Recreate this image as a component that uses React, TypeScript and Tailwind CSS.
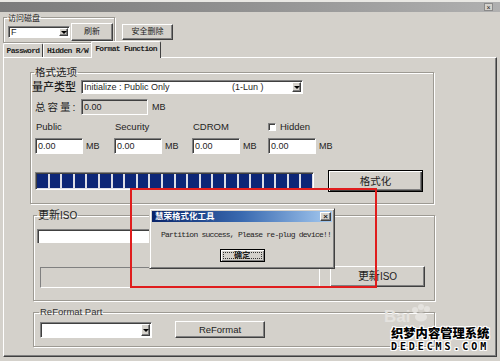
import React from 'react'

const face = 'bg-[#d4d1cb]'
const raised =
  'border border-t-white border-l-white border-r-[#404040] border-b-[#404040] shadow-[inset_-1px_-1px_0_#808080]'
const sunken =
  'border border-t-[#808080] border-l-[#808080] border-r-white border-b-white shadow-[inset_1px_1px_0_#404040]'
const group =
  'border border-[#9d9a93] shadow-[inset_1px_1px_0_#fff,1px_1px_0_#fff] p-0 m-0 min-w-0'
const outline =
  '[text-shadow:1px_0_0_#fff,-1px_0_0_#fff,0_1px_0_#fff,0_-1px_0_#fff,1px_1px_0_#fff,-1px_-1px_0_#fff,1px_-1px_0_#fff,-1px_1px_0_#fff]'

const Button: React.FC<{ className?: string; children: React.ReactNode }> = ({
  className = '',
  children,
}) => (
  <div
    className={`${raised} ${face} flex items-center justify-center leading-none ${className}`}
  >
    {children}
  </div>
)

const Arrow = () => (
  <span className="border-x-[3px] border-x-transparent border-t-[3px] border-t-black" />
)

const Combo: React.FC<{ className?: string; children?: React.ReactNode }> = ({
  className = '',
  children,
}) => (
  <div className={`${sunken} bg-white flex items-stretch ${className}`}>
    <span className="flex-1 flex items-center pl-[2px] text-[9px] leading-none overflow-hidden whitespace-nowrap">
      {children}
    </span>
    <span className={`w-[9px] m-[1px] ${raised} ${face} flex items-center justify-center`}>
      <Arrow />
    </span>
  </div>
)

const Input: React.FC<{ className?: string; value?: string; gray?: boolean }> = ({
  className = '',
  value = '',
  gray = false,
}) => (
  <div
    className={`${sunken} ${gray ? face : 'bg-white'} flex items-center pl-[2px] text-[9px] leading-none ${className}`}
  >
    {value}
  </div>
)

const Tab: React.FC<{ className: string; active?: boolean; children: React.ReactNode }> = ({
  className,
  active = false,
  children,
}) => (
  <div
    className={`border-t border-l border-r border-t-white border-l-white border-r-[#404040] rounded-t-[2px] ${face} flex items-center justify-center font-['Liberation_Mono',monospace] font-bold text-[8px] tracking-[-0.7px] leading-none whitespace-nowrap ${
      active ? 'relative z-10 h-[17px] -mb-px -ml-px pb-[2px]' : 'h-[14px]'
    } ${className}`}
  >
    {children}
  </div>
)

const sizes = [
  { label: 'Public', w: 'w-[79px]' },
  { label: 'Security', w: 'w-[78px]' },
  { label: 'CDROM', w: 'w-[76px]' },
]

export default function App() {
  return (
    <div className="relative w-[500px] h-[361px] overflow-hidden bg-[#d4d1cb] text-[#1e1e1e] font-['Liberation_Sans','Noto_Sans_CJK_SC',sans-serif]">
      {/* window title */}
      <div className="h-[12px] border-t-2 border-t-[#e9e8e4] bg-linear-to-r from-[#7b7b7b] via-[#929292] to-[#b0b0b0] flex items-center justify-end pr-[7px]">
        <div className="w-[9px] h-[8px] bg-[#d4d1cb] border border-[#8a8a8a] text-[7px] leading-none flex items-center justify-center">
          ×
        </div>
      </div>

      {/* disk row */}
      <div className="flex items-start h-[31px]">
        <fieldset className={`ml-[3px] w-[112px] h-[31px] ${group}`}>
          <legend className="ml-[3px] px-[1px] text-[8px] leading-[11px] font-['Noto_Sans_CJK_SC',sans-serif]">
            访问磁盘
          </legend>
          <div className="flex items-center h-[18px]">
            <Combo className="ml-[4px] w-[62px] h-[12px]">F</Combo>
            <Button className="ml-[1px] w-[42px] h-[18px] text-[8px]">刷新</Button>
          </div>
        </fieldset>
        <Button className="ml-[7px] mt-[12px] w-[51px] h-[16px] text-[8px]">安全删除</Button>
      </div>

      {/* tabs */}
      <div className="flex items-end h-[14px] pl-[3px]">
        <Tab className="w-[40px]">Password</Tab>
        <Tab className="w-[49px]">Hidden R/W</Tab>
        <Tab className="w-[70px]" active>
          Format Function
        </Tab>
      </div>

      {/* tab panel */}
      <div
        className={`mx-[3px] w-[494px] h-[300px] border border-t-white border-l-white border-r-[#404040] border-b-[#404040] shadow-[inset_-1px_-1px_0_#808080]`}
      >
        {/* 格式选项 */}
        <fieldset className={`ml-[26px] mt-[8px] w-[404px] h-[138px] ${group}`}>
          <legend className="ml-[3px] px-[1px] text-[10.5px] leading-[12px]">格式选项</legend>
          <div className="mt-[2px] h-[14px] flex items-center">
            <span className="ml-[1px] w-[49px] text-[11px] leading-none font-medium whitespace-nowrap">量产类型</span>
            <Combo className="w-[222px] h-[14px]">
              <span className="w-[148px]">Initialize : Public Only</span>
              <span>(1-Lun )</span>
            </Combo>
          </div>
          <div className="mt-[5px] h-[16px] flex items-center">
            <span className="ml-[4px] w-[46px] text-[10.5px] leading-none tracking-[2px] whitespace-nowrap">总容量:</span>
            <Input className="w-[67px] h-[16px]" value="0.00" gray />
            <span className="ml-[4px] text-[9px] leading-none">MB</span>
          </div>
          <div className="mt-[6px] h-[12px] flex items-center pl-[4px] text-[9.5px] leading-none">
            {sizes.map((s) => (
              <span key={s.label} className={`${s.w} pl-[1px]`}>
                {s.label}
              </span>
            ))}
            <span className={`w-[8px] h-[8px] bg-white ${sunken}`} />
            <span className="ml-[4px]">Hidden</span>
          </div>
          <div className="mt-[5px] h-[16px] flex items-center pl-[4px]">
            {sizes.map((s) => (
              <div key={s.label} className={`${s.w} flex items-center`}>
                <Input className="w-[48px] h-[16px]" value="0.00" />
                <span className="ml-[3px] text-[9px] leading-none">MB</span>
              </div>
            ))}
            <Input className="w-[48px] h-[16px]" value="0.00" />
            <span className="ml-[3px] text-[9px] leading-none">MB</span>
          </div>
          <div className="mt-[16px] h-[22px] flex items-center">
            <div className={`ml-[4px] w-[279px] h-[18px] ${sunken} bg-[#dcdde6] flex gap-[2px] p-[1px]`}>
              {Array.from({ length: 22 }).map((_, i) => (
                <span key={i} className="flex-1 bg-[#0d2677]" />
              ))}
            </div>
            <div className="ml-[14px] w-[95px] h-[22px] border border-black shadow-[inset_1px_1px_0_#fff,inset_-1px_-1px_0_#404040,inset_-2px_-2px_0_#808080] bg-[#d4d1cb] flex items-center justify-center text-[10.5px] leading-none">
              格式化
            </div>
          </div>
        </fieldset>

        {/* 更新ISO */}
        <fieldset className={`ml-[29px] mt-[5px] w-[402px] h-[92px] ${group}`}>
          <legend className="ml-[3px] px-[1px] text-[11px] leading-[12px]">
            更新<span className="text-[10px]">ISO</span>
          </legend>
          <div className="mt-[7px] ml-[3px] w-[283px] h-[14px] bg-white border-t border-l border-[#808080] shadow-[inset_1px_1px_0_#404040]" />
          <div className="mt-[23px] flex items-start">
            <div className={`ml-[6px] mt-[1px] w-[280px] h-[21px] ${sunken} shadow-none bg-[#d4d1cb]`} />
            <Button className="ml-[10px] w-[95px] h-[21px] text-[11px]">
              更新<span className="text-[10px]">ISO</span>
            </Button>
          </div>
        </fieldset>

        {/* ReFormat Part */}
        <fieldset className={`ml-[29px] mt-[5px] w-[402px] h-[41px] ${group}`}>
          <legend className="ml-[5px] px-[1px] text-[9.5px] leading-[12px] text-[#333]">ReFormat Part</legend>
          <div className="mt-[3px] flex items-start">
            <Combo className="ml-[6px] mt-[1px] w-[112px] h-[16px]" />
            <Button className="ml-[23px] w-[90px] h-[17px] text-[9.5px]">ReFormat</Button>
          </div>
        </fieldset>
      </div>

      {/* baidu watermark */}
      <div className="absolute left-[384px] top-[304px] flex items-end text-[#e4e2de] select-none">
        <span className="text-[17px] font-bold leading-none">Bai</span>
        <svg width="24" height="18" viewBox="0 0 24 18" className="mb-[3px]">
          <circle cx="5" cy="6" r="3" fill="#e4e2de" />
          <circle cx="11" cy="3" r="3" fill="#e4e2de" />
          <circle cx="17" cy="5" r="3" fill="#e4e2de" />
          <ellipse cx="11" cy="13" rx="6" ry="4.5" fill="#e4e2de" />
        </svg>
      </div>

      {/* red highlight */}
      <div className="absolute left-[130px] top-[188px] w-[247px] h-[100px] border-2 border-[#e01d1d]" />

      {/* message dialog */}
      <div className="absolute left-[149px] top-[208px] w-[186px] h-[61px] bg-[#d4d1cb] border border-t-[#d4d1cb] border-l-[#d4d1cb] border-r-[#404040] border-b-[#404040] shadow-[inset_1px_1px_0_#fff,inset_-1px_-1px_0_#808080] p-[2px]">
        <div className="h-[11px] bg-linear-to-r from-[#0a246a] via-[#3a6ab0] to-[#a6caf0] flex items-center justify-between pl-[3px] pr-[1px]">
          <span className="text-white font-bold text-[8.5px] leading-none">慧荣格式化工具</span>
          <span className={`w-[11px] h-[9px] ${raised} ${face} flex items-center justify-center text-[8px] leading-none font-bold`}>
            ×
          </span>
        </div>
        <div className="mt-[9px] pl-[9px] font-['Liberation_Mono',monospace] text-[8px] tracking-[-0.75px] leading-none whitespace-nowrap">
          Partition success, Please re-plug device!!
        </div>
        <div className="mt-[10px] flex justify-center">
          <div className="w-[45px] h-[13px] border border-black bg-[#d4d1cb] shadow-[inset_1px_1px_0_#fff,inset_-1px_-1px_0_#808080] p-[2px]">
            <div className="h-full border border-dotted border-[#333] flex items-center justify-center text-[8px] font-bold leading-none">
              确定
            </div>
          </div>
        </div>
      </div>

      {/* dedecms watermark */}
      <div className="absolute left-[391px] top-[326px] flex flex-col items-start">
        <span className={`font-['Noto_Sans_CJK_SC',sans-serif] font-black text-[12.3px] leading-[15px] text-black ${outline}`}>
          织梦内容管理系统
        </span>
        <span className={`font-['DejaVu_Sans_Mono',monospace] font-bold text-[10px] leading-[11px] tracking-[2.9px] text-black ${outline}`}>
          DEDECMS.COM
        </span>
      </div>
    </div>
  )
}
